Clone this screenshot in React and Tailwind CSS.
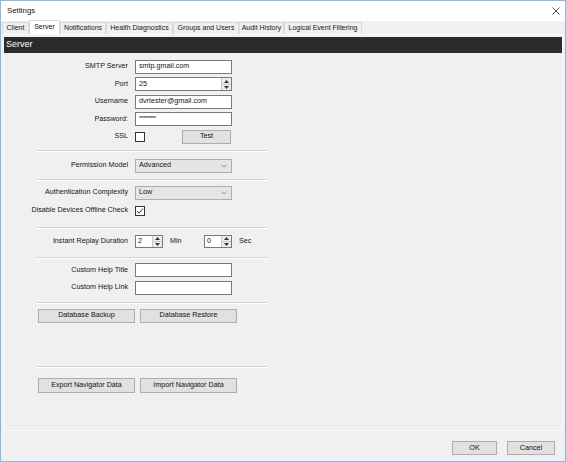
import { useState } from 'react'

const font = "font-['Liberation_Sans',Arial,sans-serif]"
const btn = 'flex items-center justify-center bg-[#e1e1e1] border border-[#adadad] text-[#111]'
const box = 'h-[14px] w-[97px] border border-[#7a7a7a] bg-white flex items-center px-[3px]'

const TABS = [
  { label: 'Client', w: 'w-[27px]' },
  { label: 'Server', w: 'w-[31px]' },
  { label: 'Notifications', w: 'w-[46px]' },
  { label: 'Health Diagnostics', w: 'w-[67px]' },
  { label: 'Groups and Users', w: 'w-[66px]' },
  { label: 'Audit History', w: 'w-[45px]' },
  { label: 'Logical Event Filtering', w: 'w-[78px]' },
]

function Row({ label, h = 'h-[17.5px]', className = '', children }) {
  return (
    <div className={`flex items-center ${h} ${className}`}>
      <div className="w-[124px] shrink-0 text-right whitespace-nowrap">{label}</div>
      <div className="ml-[7px] flex items-center">{children}</div>
    </div>
  )
}

function Sep({ className = '' }) {
  return (
    <div className={`ml-[32px] w-[232px] ${className}`}>
      <div className="h-px bg-[#d4d4d4]" />
      <div className="h-px bg-white" />
    </div>
  )
}

function Arrows({ className = '' }) {
  return (
    <div className={`flex flex-col w-[10px] h-full border-l border-[#c9c9c9] bg-[#ececec] ${className}`}>
      <div className="flex-1 flex items-center justify-center border-b border-[#c9c9c9]">
        <svg width="5" height="3" viewBox="0 0 5 3"><path d="M0 3 L2.5 0 L5 3 Z" fill="#333" /></svg>
      </div>
      <div className="flex-1 flex items-center justify-center">
        <svg width="5" height="3" viewBox="0 0 5 3"><path d="M0 0 L2.5 3 L5 0 Z" fill="#333" /></svg>
      </div>
    </div>
  )
}

function Spin({ value }) {
  return (
    <div className="h-[13px] w-[28px] border border-[#7a7a7a] bg-white flex items-center">
      <span className="flex-1 pl-[2px]">{value}</span>
      <Arrows />
    </div>
  )
}

function Select({ value }) {
  return (
    <div className="h-[14px] w-[97px] border border-[#adadad] bg-[#e5e5e5] flex items-center justify-between pl-[3px] pr-[4px]">
      <span>{value}</span>
      <svg width="6" height="4" viewBox="0 0 6 4"><path d="M0.5 0.5 L3 3 L5.5 0.5" stroke="#777" fill="none" strokeWidth="0.8" /></svg>
    </div>
  )
}

function Check({ checked }) {
  return (
    <div className="h-[10px] w-[10px] border border-[#333] bg-white flex items-center justify-center">
      {checked && (
        <svg width="8" height="8" viewBox="0 0 8 8"><path d="M1 4 L3 6.2 L7 1.5" stroke="#222" fill="none" strokeWidth="0.9" /></svg>
      )}
    </div>
  )
}

export default function App() {
  const [tab, setTab] = useState('Server')

  return (
    <div className={`w-[566px] h-[462px] border border-[#86b8e8] bg-[#f0f0f0] flex flex-col overflow-hidden text-[7.2px] text-[#151515] ${font}`}>
      {/* title bar */}
      <div className="h-[20px] shrink-0 bg-white flex items-center justify-between pl-[6px] pr-[5px]">
        <span className="text-[7.8px]">Settings</span>
        <svg width="8" height="8" viewBox="0 0 8 8"><path d="M0.5 0.5 L7.5 7.5 M7.5 0.5 L0.5 7.5" stroke="#222" strokeWidth="0.8" /></svg>
      </div>

      {/* tabs */}
      <div className="h-[13px] shrink-0 flex items-end pl-[1px] text-[7px]">
        {TABS.map((t) => (
          <button
            key={t.label}
            onClick={() => setTab(t.label)}
            className={`${t.w} flex items-center justify-center border border-b-0 whitespace-nowrap ${
              tab === t.label ? 'h-[14px] bg-white border-[#d9d9d9]' : 'h-[12px] bg-[#f0f0f0] border-[#dadada]'
            }`}
          >
            {t.label}
          </button>
        ))}
      </div>

      {/* panel */}
      <div className="mx-[2px] flex-1 flex flex-col border border-[#fbfbfb]">
        <div className="mt-[2px] h-[16px] bg-[#2b2b2b] text-white text-[9px] flex items-center pl-[2px]">Server</div>

        <div className="pt-[5px]">
          <Row label="SMTP Server"><div className={box}>smtp.gmail.com</div></Row>
          <Row label="Port">
            <div className={`${box} pr-0`}>
              <span className="flex-1">25</span>
              <Arrows />
            </div>
          </Row>
          <Row label="Username"><div className={box}>dvrtester@gmail.com</div></Row>
          <Row label="Password:"><div className={`${box} items-start pt-[1px] text-[6px] tracking-[-0.5px]`}>*********</div></Row>
          <Row label="SSL">
            <Check />
            <div className={`${btn} ml-[37px] h-[14px] w-[49px]`}>Test</div>
          </Row>

          <Sep className="mt-[4px]" />
          <Row label="Permission Model" h="h-[16px]" className="mt-[6px]"><Select value="Advanced" /></Row>
          <Sep className="mt-[5px]" />
          <Row label="Authentication Complexity" h="h-[16px]" className="mt-[4px]"><Select value="Low" /></Row>
          <Row label="Disable Devices Offline Check" h="h-[18px]" className="mt-[1px]"><Check checked /></Row>
          <Sep className="mt-[7px]" />
          <Row label="Instant Replay Duration" h="h-[16px]" className="mt-[5px]">
            <Spin value="2" />
            <span className="ml-[7px] w-[34px]">Min</span>
            <Spin value="0" />
            <span className="ml-[7px]">Sec</span>
          </Row>
          <Sep className="mt-[7px]" />
          <Row label="Custom Help Title" className="mt-[3px]"><div className={box} /></Row>
          <Row label="Custom Help Link"><div className={box} /></Row>
          <Sep className="mt-[5px]" />
          <div className="mt-[5px] ml-[34px] flex gap-[5px]">
            <div className={`${btn} h-[14px] w-[97px]`}>Database Backup</div>
            <div className={`${btn} h-[14px] w-[97px]`}>Database Restore</div>
          </div>
          <Sep className="mt-[43px]" />
          <div className="mt-[10px] ml-[34px] flex gap-[5px]">
            <div className={`${btn} h-[15px] w-[97px]`}>Export Navigator Data</div>
            <div className={`${btn} h-[15px] w-[97px]`}>Import Navigator Data</div>
          </div>
        </div>
      </div>

      {/* footer */}
      <div className="h-[30px] shrink-0 flex items-start justify-end gap-[10px] pt-[10px] pr-[10px]">
        <div className={`${btn} h-[14px] w-[45px]`}>OK</div>
        <div className={`${btn} h-[14px] w-[48px]`}>Cancel</div>
      </div>
    </div>
  )
}
